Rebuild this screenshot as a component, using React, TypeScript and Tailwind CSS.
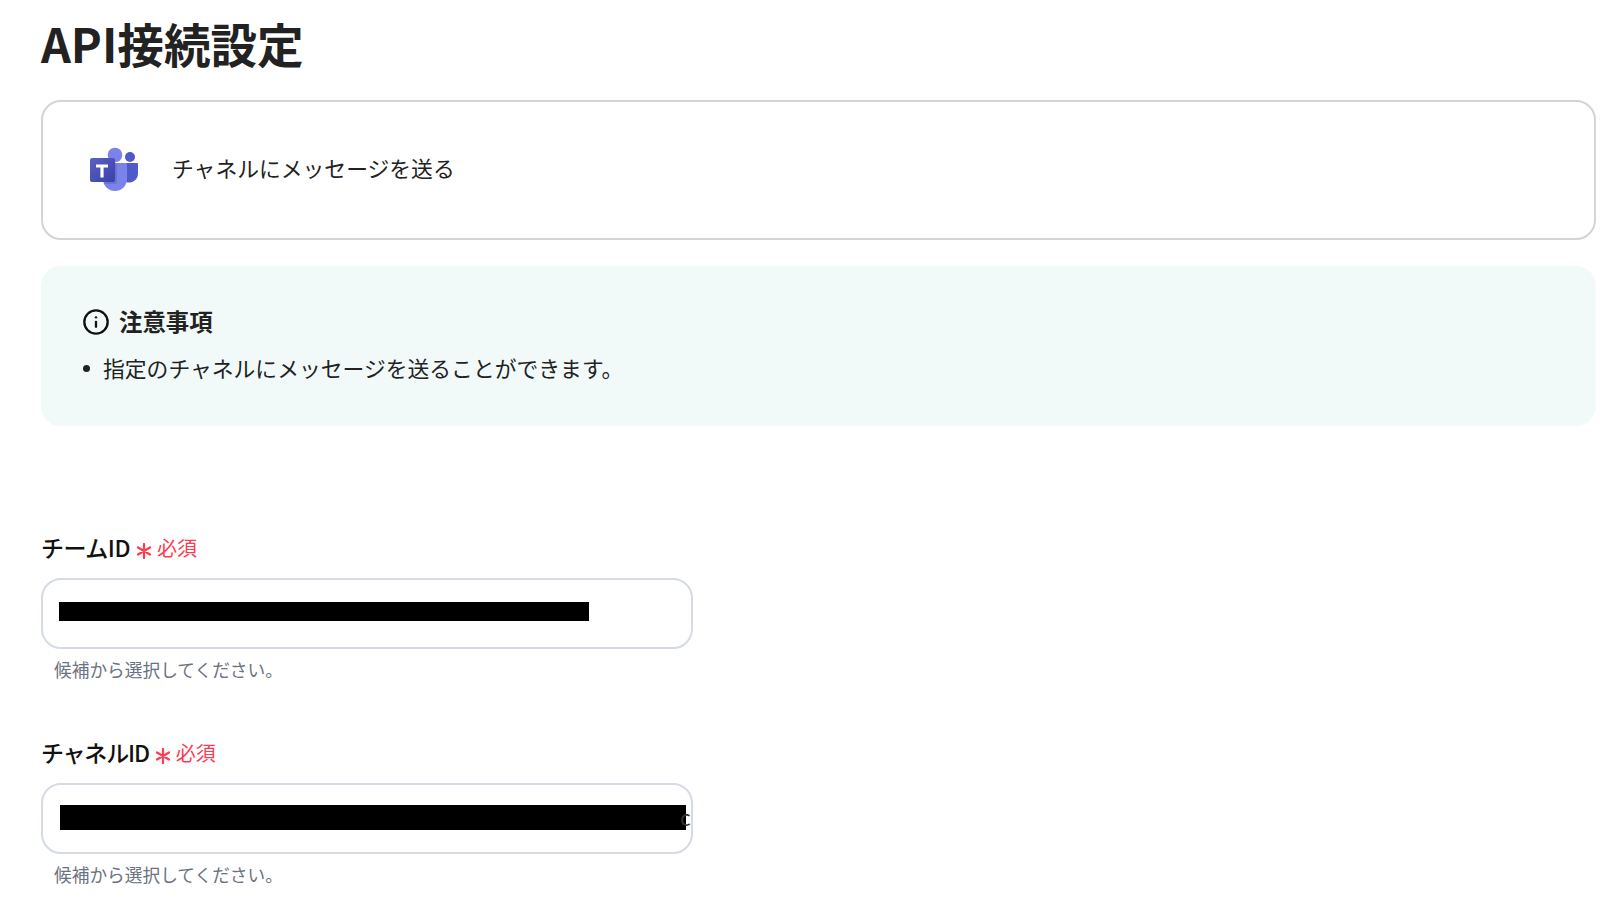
import { Info } from "lucide-react";

const fontStack = "font-['Noto_Sans_CJK_JP','Noto_Sans_CJK_SC',sans-serif]";

function TeamsLogo() {
  return (
    <svg width="50" height="46" viewBox="0 0 50 46" className="shrink-0">
      <defs>
        <linearGradient id="teamsSquare" x1="0" y1="0" x2="1" y2="1">
          <stop offset="0" stopColor="#5a62c3" />
          <stop offset="1" stopColor="#3940ab" />
        </linearGradient>
      </defs>
      <circle cx="41" cy="10" r="5" fill="#5059c9" />
      <path d="M37 16h11a1 1 0 0 1 1 1v10a9 9 0 0 1-12 8z" fill="#5059c9" />
      <circle cx="26" cy="8" r="7.3" fill="#7b83eb" />
      <path d="M14 16h22a2 2 0 0 1 2 2v14a12 12 0 0 1-24 0z" fill="#7b83eb" />
      <path d="M14 16h12a2 2 0 0 1 2 2v17a2 2 0 0 1-2 2H16a12 12 0 0 1-2-5z" fill="#000" opacity="0.12" />
      <rect x="1" y="11" width="25" height="24" rx="2" fill="url(#teamsSquare)" />
      <path d="M19 17.5h-12v3h4.4v10h3.2v-10H19z" fill="#fff" />
    </svg>
  );
}

// 必須マーク
function RequiredMark() {
  return (
    <svg width="16" height="16" viewBox="0 0 16 16" className="ml-[6px] shrink-0 translate-y-[3px] text-[#ff3b52]">
      <path d="M8 1v14M2 4.5l12 7M14 4.5l-12 7" stroke="currentColor" strokeWidth="2.2" strokeLinecap="round" />
    </svg>
  );
}

type FieldProps = {
  label: string;
  labelTracking: string;
  barClass: string;
  barOffset: string;
  tail?: string;
};

function Field({ label, labelTracking, barClass, barOffset, tail }: FieldProps) {
  return (
    <div>
      <div className="flex items-center h-[24px]">
        <span className={`-translate-y-[1px] text-[23px] font-medium text-[#111] leading-[24px] ${labelTracking}`}>{label}</span>
        <RequiredMark />
        <span className="ml-[5px] text-[20px] leading-[24px] text-[#ff3b52]">必須</span>
      </div>
      <div className={`mt-[18px] w-[652px] h-[71px] rounded-[20px] border-2 border-[#d5dae5] bg-white flex items-center ${barOffset}`}>
        <div className={`bg-black shrink-0 ${barClass}`} />
        {tail && <span className="-ml-[6px] text-[21px] leading-none text-[#333] -translate-y-[1px]">{tail}</span>}
      </div>
      <p className="mt-[8px] ml-[13px] text-[17.7px] leading-[24px] text-[#6b7280]">候補から選択してください。</p>
    </div>
  );
}

export default function App() {
  return (
    <div className={`h-[899px] overflow-hidden bg-white pl-[41px] pr-[4px] ${fontStack}`}>
      <h1 className="pt-[12px] h-[100px] text-[46.6px] leading-[62px] font-bold text-[#222]">API接続設定</h1>

      <div className="h-[140px] rounded-[20px] border-2 border-[#d4d4d4] flex items-center pl-[46px]">
        <TeamsLogo />
        <span className="ml-[33px] -translate-y-[2px] text-[21.8px] text-[#222]">チャネルにメッセージを送る</span>
      </div>

      <div className="mt-[26px] h-[160px] rounded-[20px] bg-[#f1faf9] pl-[41px] pt-[40px]">
        <div className="flex items-center h-[32px]">
          <Info size={28} strokeWidth={2} className="text-[#111] shrink-0" />
          <span className="ml-[9px] text-[23.4px] font-semibold text-[#222]">注意事項</span>
        </div>
        <div className="mt-[15px] flex items-center h-[30px]">
          <span className="ml-[1px] w-[7px] h-[7px] rounded-full bg-[#222]" />
          <span className="ml-[13px] text-[21.8px] text-[#222]">指定のチャネルにメッセージを送ることができます。</span>
        </div>
      </div>

      <div className="mt-[110px] flex flex-col gap-[60px]">
        <Field label="チームID" labelTracking="tracking-[-0.5px]" barClass="w-[530px] h-[19px] -translate-y-[2px]" barOffset="pl-[16px]" />
        <Field label="チャネルID" labelTracking="tracking-[-1.2px]" barClass="w-[626px] h-[25px] -translate-y-[1px]" barOffset="pl-[17px]" tail="c" />
      </div>
    </div>
  );
}
